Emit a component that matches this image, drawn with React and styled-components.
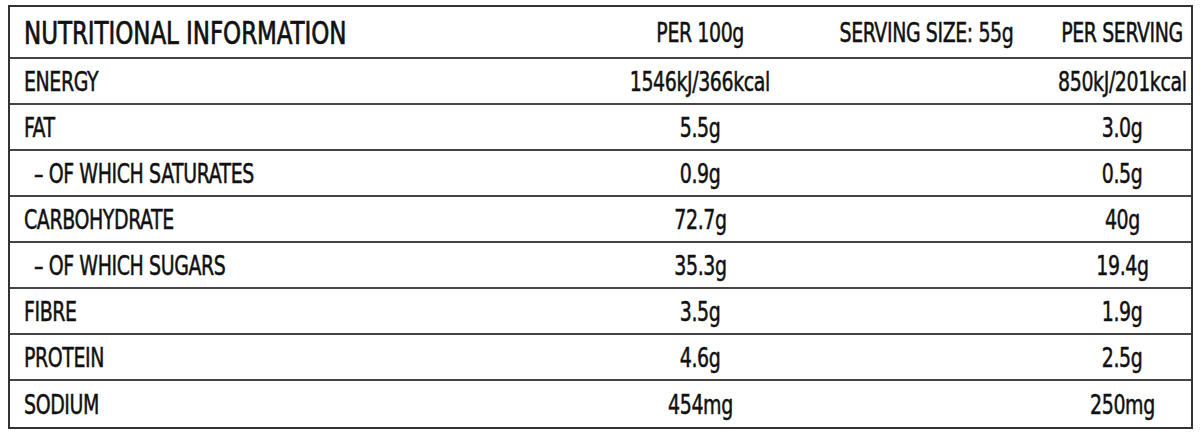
import React from 'react';
import styled, { createGlobalStyle } from 'styled-components';

const GlobalStyle = createGlobalStyle`
  html, body {
    margin: 0;
    padding: 0;
    background: #fff;
  }
  body {
    font-family: "DejaVu Sans Condensed", "DejaVu Sans", "Liberation Sans", sans-serif;
    font-stretch: condensed;
    color: #111;
  }
`;

const Page = styled.div`
  padding: 5px 7px 0 8px;
`;

const Table = styled.div`
  width: 1185px;
  box-sizing: border-box;
  border: 2px solid #333;
`;

const Row = styled.div`
  --sx: 0.78;
  --stroke: 0.5px;
  display: grid;
  grid-template-columns: 1fr 200px 253px 138px;
  align-items: center;
  height: ${(p) => (p.head ? '52px' : '46px')};
  box-sizing: border-box;
  border-bottom: ${(p) => (p.last ? 'none' : '2px solid #444')};
  font-size: 27px;
  letter-spacing: -0.5px;
`;

const Name = styled.div`
  padding-left: ${(p) => (p.sub ? '24px' : '14px')};
  white-space: nowrap;
`;

const Title = styled(Name)`
  --sx: 0.8;
  --stroke: 0.7px;
  font-size: 32px;
  letter-spacing: -0.1px;
  padding-top: 1px;
`;

const Cell = styled.div`
  display: flex;
  justify-content: center;
  white-space: nowrap;
`;

/* DIN-like condensed look: squeeze the glyphs horizontally */
const Text = styled.span`
  display: inline-block;
  flex-shrink: 0;
  transform: scaleX(var(--sx));
  transform-origin: ${(p) => (p.left ? 'left center' : 'center')};
  -webkit-text-stroke: var(--stroke) #111;
`;

const rows = [
  { name: 'ENERGY', per100: '1546kJ/366kcal', serving: '850kJ/201kcal' },
  { name: 'FAT', per100: '5.5g', serving: '3.0g' },
  { name: '– OF WHICH SATURATES', per100: '0.9g', serving: '0.5g', sub: true },
  { name: 'CARBOHYDRATE', per100: '72.7g', serving: '40g' },
  { name: '– OF WHICH SUGARS', per100: '35.3g', serving: '19.4g', sub: true },
  { name: 'FIBRE', per100: '3.5g', serving: '1.9g' },
  { name: 'PROTEIN', per100: '4.6g', serving: '2.5g' },
  { name: 'SODIUM', per100: '454mg', serving: '250mg' },
];

const App = () => (
  <Page>
    <GlobalStyle />
    <Table>
      <Row head>
        <Title><Text left>NUTRITIONAL INFORMATION</Text></Title>
        <Cell><Text>PER 100g</Text></Cell>
        <Cell><Text>SERVING SIZE: 55g</Text></Cell>
        <Cell><Text>PER SERVING</Text></Cell>
      </Row>
      {rows.map((r, i) => (
        <Row key={r.name} last={i === rows.length - 1}>
          <Name sub={r.sub}><Text left>{r.name}</Text></Name>
          <Cell><Text>{r.per100}</Text></Cell>
          <Cell />
          <Cell><Text>{r.serving}</Text></Cell>
        </Row>
      ))}
    </Table>
  </Page>
);

export default App;
